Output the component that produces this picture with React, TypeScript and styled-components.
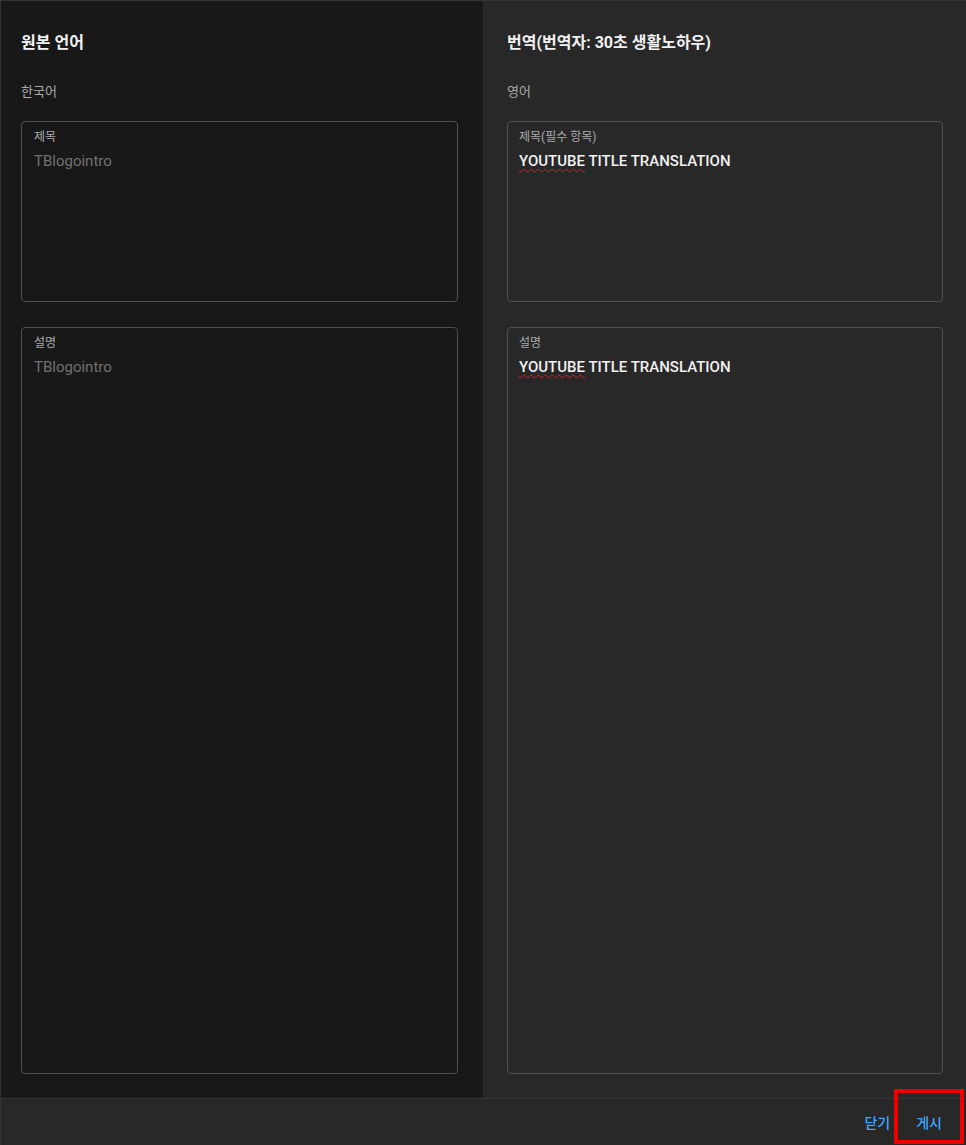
import styled, { createGlobalStyle } from 'styled-components';

const GlobalStyle = createGlobalStyle`
  html, body {
    margin: 0;
    padding: 0;
    background: #181818;
  }
  body {
    font-family: Roboto, "Noto Sans CJK KR", "Noto Sans", sans-serif;
    -webkit-font-smoothing: antialiased;
  }
`;

const fields = [
  { original: '제목', translated: '제목(필수 항목)', grow: false },
  { original: '설명', translated: '설명', grow: true },
];

export default function App() {
  return (
    <>
      <GlobalStyle />
      <Dialog>
        <Columns>
          <Panel $tone="dark" $pad="30px 25px 24px 20px">
            <PanelTitle>원본 언어</PanelTitle>
            <LanguageName>한국어</LanguageName>
            {fields.map((f) => (
              <FieldBox key={f.original} $grow={f.grow}>
                <FieldLabel>{f.original}</FieldLabel>
                <FieldValue $muted>TBlogointro</FieldValue>
              </FieldBox>
            ))}
          </Panel>
          <Panel $tone="light" $pad="30px 23px 24px 24px">
            <PanelTitle>번역(번역자: 30초 생활노하우)</PanelTitle>
            <LanguageName>영어</LanguageName>
            {fields.map((f) => (
              <FieldBox key={f.translated} $grow={f.grow} $inset={11}>
                <FieldLabel>{f.translated}</FieldLabel>
                <FieldValue>
                  <Misspelled>YOUTUBE</Misspelled> TITLE TRANSLATION
                </FieldValue>
              </FieldBox>
            ))}
          </Panel>
        </Columns>
        <Footer>
          <TextButton>닫기</TextButton>
          <TextButton $highlight>게시</TextButton>
        </Footer>
      </Dialog>
    </>
  );
}

const Dialog = styled.div`
  display: flex;
  flex-direction: column;
  height: 1145px;
  box-sizing: border-box;
  border-top: 1px solid #333;
  border-left: 1px solid #333;
`;

const Columns = styled.div`
  flex: 1;
  display: grid;
  grid-template-columns: 482px 1fr;
  min-height: 0;
`;

const Panel = styled.section<{ $tone: 'dark' | 'light'; $pad: string }>`
  display: flex;
  flex-direction: column;
  padding: ${(p) => p.$pad};
  background: ${(p) => (p.$tone === 'dark' ? '#181818' : '#282828')};
  box-sizing: border-box;
  min-height: 0;
`;

const PanelTitle = styled.h2`
  margin: 0;
  font-size: 16px;
  line-height: 24px;
  font-weight: 700;
  color: #f1f1f1;
`;

const LanguageName = styled.div`
  margin: 27px 0 19px;
  font-size: 13px;
  line-height: 20px;
  color: #aaaaaa;
`;

const FieldBox = styled.div<{ $grow: boolean; $inset?: number }>`
  display: flex;
  flex-direction: column;
  gap: 5px;
  box-sizing: border-box;
  height: ${(p) => (p.$grow ? 'auto' : '181px')};
  flex: ${(p) => (p.$grow ? '1' : 'none')};
  padding: 7px ${(p) => p.$inset ?? 12}px;
  border: 1px solid #4f4f4f;
  border-radius: 4px;
  & + & {
    margin-top: 25px;
  }
`;

const FieldLabel = styled.div`
  font-size: 12px;
  line-height: 16px;
  color: #aaaaaa;
`;

const FieldValue = styled.div<{ $muted?: boolean }>`
  font-size: 15px;
  line-height: 22px;
  font-weight: ${(p) => (p.$muted ? 400 : 500)};
  color: ${(p) => (p.$muted ? '#717171' : '#f1f1f1')};
`;

const Misspelled = styled.span`
  text-decoration: underline wavy #d3202a;
  text-decoration-thickness: 1px;
  text-underline-offset: 2px;
`;

const Footer = styled.footer`
  display: flex;
  justify-content: flex-end;
  align-items: stretch;
  gap: 2px;
  height: 46px;
  padding: 0 12px;
  background: #282828;
  border-top: 1px solid #353535;
`;

const TextButton = styled.button<{ $highlight?: boolean }>`
  position: relative;
  padding: 0 12px;
  border: none;
  background: none;
  font-family: inherit;
  font-size: 14px;
  font-weight: 500;
  color: #3ea6ff;
  cursor: pointer;

  ${(p) =>
    p.$highlight &&
    `
    &::after {
      content: '';
      position: absolute;
      top: -10px;
      bottom: 1px;
      left: -10px;
      right: -10px;
      border: 4px solid #ee0000;
    }
  `}
`;
